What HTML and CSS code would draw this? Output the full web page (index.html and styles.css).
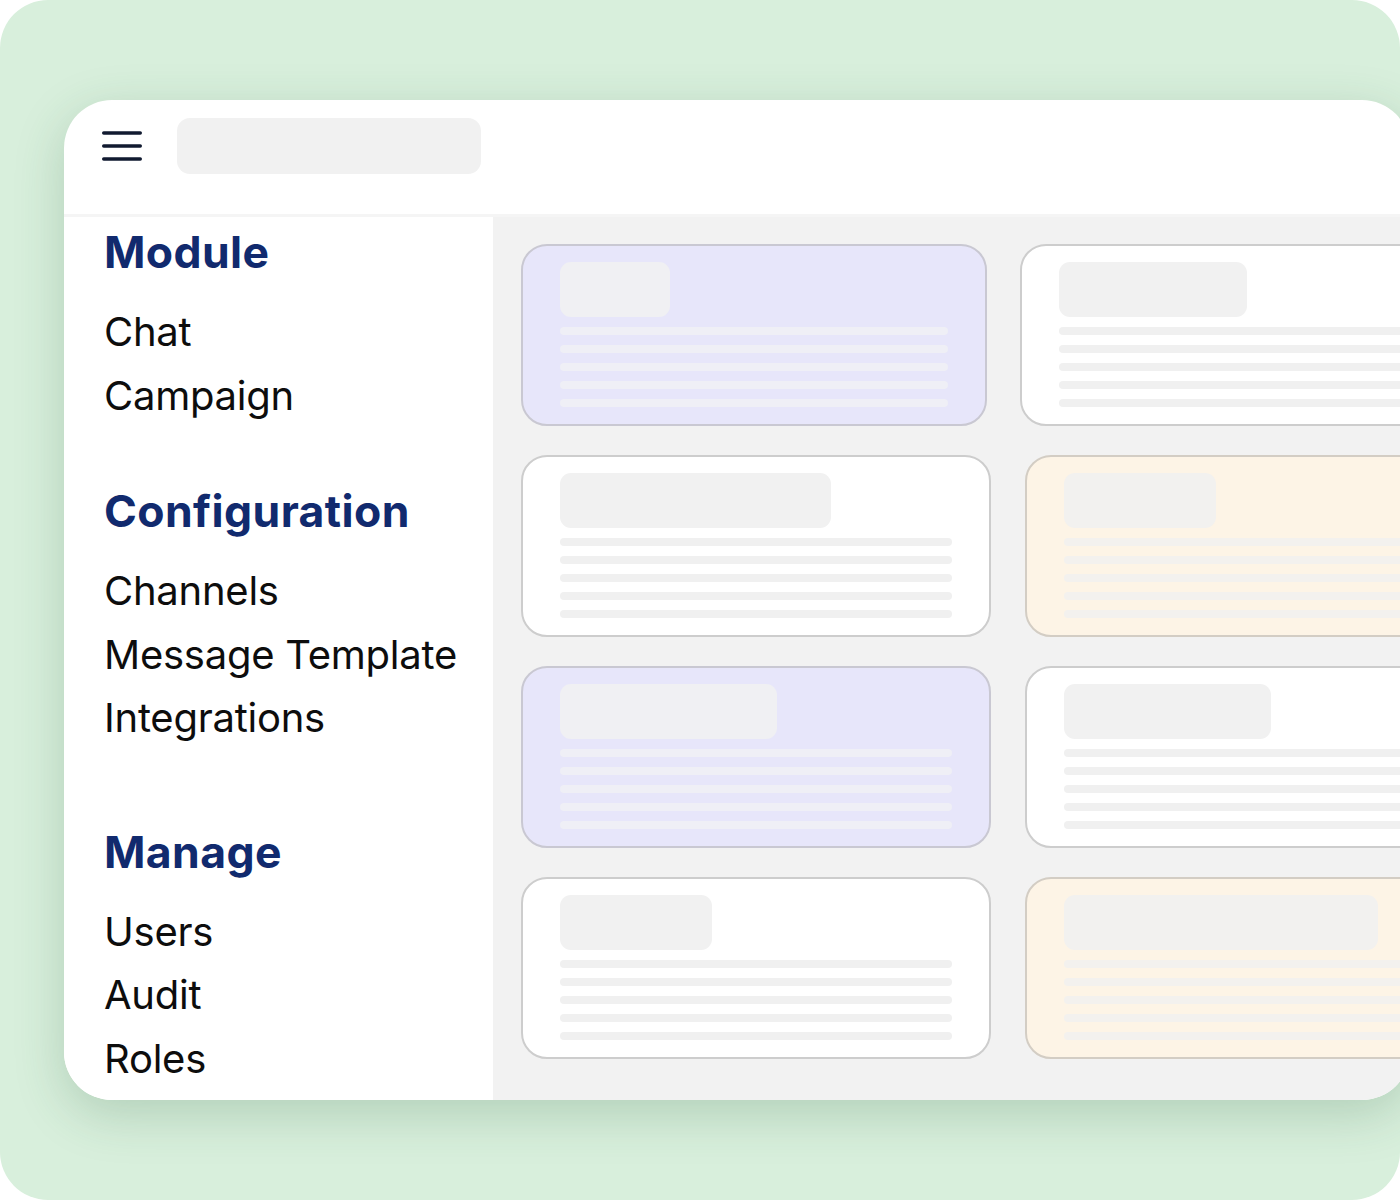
FILE: index.html
```html
<!DOCTYPE html>
<html lang="en">
<head>
<meta charset="utf-8">
<title>Dashboard</title>
<link rel="stylesheet" href="styles.css">
</head>
<body>
<div class="scene">
  <div class="window">
    <header class="topbar">
      <svg class="menu-icon" width="40" height="30" viewBox="0 0 40 30" aria-hidden="true">
        <g stroke="#111a30" stroke-width="3.4" stroke-linecap="round">
          <line x1="1.7" y1="2" x2="38.3" y2="2"/>
          <line x1="1.7" y1="15" x2="38.3" y2="15"/>
          <line x1="1.7" y1="28" x2="38.3" y2="28"/>
        </g>
      </svg>
      <div class="search"></div>
    </header>
    <div class="body">
      <nav class="sidebar">
        <section class="nav-section">
          <h2 class="nav-title">Module</h2>
          <ul class="nav-list">
            <li>Chat</li>
            <li>Campaign</li>
          </ul>
        </section>
        <section class="nav-section nav-section--config">
          <h2 class="nav-title">Configuration</h2>
          <ul class="nav-list">
            <li>Channels</li>
            <li>Message Template</li>
            <li>Integrations</li>
          </ul>
        </section>
        <section class="nav-section nav-section--manage">
          <h2 class="nav-title">Manage</h2>
          <ul class="nav-list">
            <li>Users</li>
            <li>Audit</li>
            <li>Roles</li>
          </ul>
        </section>
      </nav>
      <main class="content">
        <div class="row row--first">
          <div class="card card--purple card--narrow">
            <div class="ph ph--w110"></div>
            <div class="lines"><span></span><span></span><span></span><span></span><span></span></div>
          </div>
          <div class="card">
            <div class="ph ph--w188"></div>
            <div class="lines"><span></span><span></span><span></span><span></span><span></span></div>
          </div>
        </div>
        <div class="row">
          <div class="card">
            <div class="ph ph--w271"></div>
            <div class="lines"><span></span><span></span><span></span><span></span><span></span></div>
          </div>
          <div class="card card--orange">
            <div class="ph ph--w152"></div>
            <div class="lines"><span></span><span></span><span></span><span></span><span></span></div>
          </div>
        </div>
        <div class="row">
          <div class="card card--purple">
            <div class="ph ph--w217"></div>
            <div class="lines"><span></span><span></span><span></span><span></span><span></span></div>
          </div>
          <div class="card">
            <div class="ph ph--w207"></div>
            <div class="lines"><span></span><span></span><span></span><span></span><span></span></div>
          </div>
        </div>
        <div class="row">
          <div class="card">
            <div class="ph ph--w152"></div>
            <div class="lines"><span></span><span></span><span></span><span></span><span></span></div>
          </div>
          <div class="card card--orange">
            <div class="ph ph--w314"></div>
            <div class="lines"><span></span><span></span><span></span><span></span><span></span></div>
          </div>
        </div>
      </main>
    </div>
  </div>
</div>
</body>
</html>
```
FILE: styles.css
```css
* { box-sizing: border-box; }

html, body {
  margin: 0;
  padding: 0;
  background: #ffffff;
}

body {
  font-family: Inter, "Noto Sans", "Liberation Sans", sans-serif;
}

.scene {
  width: 1400px;
  height: 1200px;
  background: #d8efdc;
  border-radius: 48px;
  overflow: hidden;
  padding: 100px 0 0 64px;
}

.window {
  width: 1346px;
  height: 1000px;
  background: #ffffff;
  border-radius: 48px;
  overflow: hidden;
  box-shadow: 0 14px 50px rgba(40, 95, 60, 0.22);
  display: flex;
  flex-direction: column;
}

.topbar {
  height: 117px;
  flex: none;
  display: flex;
  align-items: flex-start;
  padding: 18px 0 0 38px;
  gap: 35px;
  border-bottom: 3px solid #f5f5f5;
}

.menu-icon {
  display: block;
  flex: none;
  margin-top: 13px;
}

.search {
  width: 304px;
  height: 56px;
  background: #f1f1f1;
  border-radius: 13px;
}

.body {
  flex: 1;
  display: flex;
  min-height: 0;
}

.sidebar {
  width: 429px;
  flex: none;
  background: #ffffff;
  padding: 7px 0 0 40px;
}

.nav-section { margin: 0; }
.nav-section--config { margin-top: 56px; }
.nav-section--manage { margin-top: 74px; }

.nav-title {
  margin: 0 0 20px;
  font-size: 44.5px;
  line-height: 56px;
  font-weight: 700;
  color: #112a6e;
  letter-spacing: 0.4px;
}

.nav-list {
  list-style: none;
  margin: 0;
  padding: 0;
}

.nav-list li {
  font-size: 40px;
  line-height: 63.5px;
  font-weight: 400;
  letter-spacing: -0.25px;
  color: #0d0d0d;
}

.content {
  flex: 1;
  background: #f2f2f2;
  padding: 27px 0 0 28px;
  display: flex;
  flex-direction: column;
  gap: 29px;
}

.row {
  display: flex;
  gap: 34px;
}

.row--first { gap: 33px; }

.card {
  flex: none;
  width: 470px;
  height: 182px;
  background: #ffffff;
  border: 2px solid #cdcdcd;
  border-radius: 26px;
  padding: 16px 37px 0;
}

.card--narrow { width: 466px; }

.card--purple {
  background: #e7e6fa;
  border-color: #c9c8d2;
}

.card--orange {
  background: #fdf4e6;
  border-color: #d3cdc4;
}

.ph {
  height: 55px;
  background: #f1f1f1;
  border-radius: 11px;
}

.card--purple .ph { background: #f0f0f3; }
.card--orange .ph { background: #f2f1ef; }

.ph--w110 { width: 110px; }
.ph--w152 { width: 152px; }
.ph--w188 { width: 188px; }
.ph--w207 { width: 207px; }
.ph--w217 { width: 217px; }
.ph--w271 { width: 271px; }
.ph--w314 { width: 314px; }

.lines {
  margin-top: 10px;
  display: flex;
  flex-direction: column;
  gap: 10px;
}

.lines span {
  display: block;
  height: 8px;
  border-radius: 4px;
  background: #f0f0f0;
}

.card--purple .lines span { background: #efeff6; }
.card--orange .lines span { background: #f3f1ee; }
```
